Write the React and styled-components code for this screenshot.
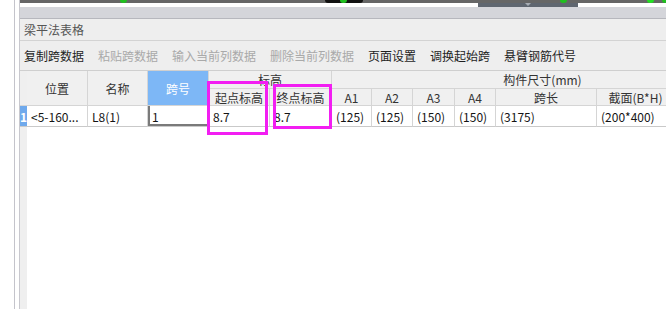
import React from 'react'
import styled, { createGlobalStyle } from 'styled-components'

const GlobalStyle = createGlobalStyle`
  html, body {
    margin: 0;
    padding: 0;
    background: #ffffff;
  }
  * {
    box-sizing: border-box;
  }
`

const fontStack = `"Microsoft YaHei", "Noto Sans CJK SC", "Noto Sans", sans-serif`

const Page = styled.div`
  position: relative;
  width: 666px;
  height: 309px;
  overflow: hidden;
  display: flex;
  background: #ffffff;
  font-family: ${fontStack};
  font-size: 12px;
`

const Frame = styled.div`
  flex: 1;
  display: flex;
  margin-left: 14px;
  padding-left: 4px;
  border-left: 1px solid #c4c4cb;
  min-width: 0;
`

const Panel = styled.div`
  flex: 1;
  display: flex;
  flex-direction: column;
  min-width: 0;
  overflow: hidden;
  border-left: 1px solid #c8c8ce;
  background: #eeeeee;
`

const CanvasStrip = styled.div`
  position: relative;
  height: 3px;
  background: #666666;
  flex-shrink: 0;
`

const Blob = styled.span`
  position: absolute;
  top: 0;
  left: ${(p) => p.x}px;
  width: ${(p) => p.w || 7}px;
  height: 3px;
  background: ${(p) => p.color || '#1fbf1f'};
  border-radius: 0 0 3px 3px;
`

const TabRow = styled.div`
  height: 4px;
  background: #ffffff;
  flex-shrink: 0;
  display: flex;
`

const SplitTab = styled.div`
  margin-left: 458px;
  width: 100px;
  height: 4px;
  background: #5f6670;
  display: flex;
  justify-content: center;
  &::after {
    content: '';
    width: 0;
    height: 0;
    border-left: 3px solid transparent;
    border-right: 3px solid transparent;
    border-top: 3px solid #a7adb5;
  }
`

const TitleBand = styled.div`
  height: 12px;
  background: #d4d5da;
  border-bottom: 1px solid #b6b7bd;
  flex-shrink: 0;
`

const TitleRow = styled.div`
  height: 22px;
  display: flex;
  align-items: center;
  padding-left: 4px;
  color: #555555;
  border-bottom: 1px solid #d3d3d3;
  flex-shrink: 0;
`

const Toolbar = styled.div`
  height: 29px;
  display: flex;
  align-items: center;
  gap: 14px;
  padding-left: 4px;
  flex-shrink: 0;
`

const ToolItem = styled.span`
  color: ${(p) => (p.disabled ? '#a9a9a9' : '#1e1e1e')};
  white-space: nowrap;
`

const TableArea = styled.div`
  flex: 1;
  background-color: #ffffff;
  background-image: linear-gradient(#efefef, #efefef);
  background-size: 7px 100%;
  background-repeat: no-repeat;
`

const Grid = styled.div`
  display: grid;
  grid-template-columns: 7px 61px 60px 61px 61px 62px 40px 41px 42px 41px 101px 78px 79px;
  grid-template-rows: 18px 17px 21px;
  width: max-content;
  border-top: 1px solid #cfcfcf;
`

const HeadCell = styled.div`
  grid-column: ${(p) => p.col || 'auto'};
  grid-row: ${(p) => p.row || 'auto'};
  display: flex;
  align-items: center;
  justify-content: center;
  background: ${(p) => (p.active ? '#7db7f6' : '#f0f0f0')};
  color: ${(p) => (p.active ? '#ffffff' : '#333333')};
  border-right: 1px solid #d5d5d5;
  border-bottom: 1px solid #d5d5d5;
  white-space: nowrap;
  overflow: hidden;
`

const GutterHead = styled.div`
  grid-column: 1;
  grid-row: 1 / span 2;
  background: #efefef;
  border-bottom: 1px solid #d5d5d5;
`

const RowNumber = styled.div`
  grid-column: 1;
  grid-row: 3;
  display: flex;
  align-items: center;
  justify-content: center;
  background: #6fa9ec;
  color: #ffffff;
  font-weight: bold;
  border-bottom: 1px solid #c9c9c9;
`

const DataCell = styled.div`
  display: flex;
  align-items: center;
  padding-left: 4px;
  color: #141414;
  background: #ffffff;
  border-right: 1px solid #d5d5d5;
  border-bottom: 1px solid #c9c9c9;
  white-space: nowrap;
  overflow: hidden;
  box-shadow: ${(p) => (p.focused ? 'inset 2px -2px 0 #7a7a7a' : 'none')};
`

const Mark = styled.div`
  position: absolute;
  left: ${(p) => p.x}px;
  top: ${(p) => p.y}px;
  width: ${(p) => p.w}px;
  height: ${(p) => p.h}px;
  border: 3px solid #f21ef2;
  pointer-events: none;
`

const tools = [
  { label: '复制跨数据' },
  { label: '粘贴跨数据', disabled: true },
  { label: '输入当前列数据', disabled: true },
  { label: '删除当前列数据', disabled: true },
  { label: '页面设置' },
  { label: '调换起始跨' },
  { label: '悬臂钢筋代号' },
]

const subHeads = ['起点标高', '终点标高', 'A1', 'A2', 'A3', 'A4', '跨长', '截面(B*H)', '']
const rowData = ['<5-160...', 'L8(1)', '1', '8.7', '8.7', '(125)', '(125)', '(150)', '(150)', '(3175)', '(200*400)', '']

const App = () => {
  return (
    <Page>
      <GlobalStyle />
      <Frame>
        <Panel>
          <CanvasStrip>
            <Blob x={100} />
            <Blob x={305} w={38} color="#111111" />
            <Blob x={320} />
            <Blob x={540} />
            <Blob x={627} w={7} color="#22e022" />
            <Blob x={642} />
          </CanvasStrip>
          <TabRow>
            <SplitTab />
          </TabRow>
          <TitleBand />
          <TitleRow>梁平法表格</TitleRow>
          <Toolbar>
            {tools.map((t) => (
              <ToolItem key={t.label} disabled={t.disabled}>
                {t.label}
              </ToolItem>
            ))}
          </Toolbar>
          <TableArea>
            <Grid>
              <GutterHead />
              <HeadCell col="2" row="1 / span 2">位置</HeadCell>
              <HeadCell col="3" row="1 / span 2">名称</HeadCell>
              <HeadCell col="4" row="1 / span 2" active>跨号</HeadCell>
              <HeadCell col="5 / span 2" row="1">标高</HeadCell>
              <HeadCell col="7 / span 7" row="1">构件尺寸(mm)</HeadCell>
              {subHeads.map((h, i) => (
                <HeadCell key={i} col={`${i + 5}`} row="2">
                  {h}
                </HeadCell>
              ))}
              <RowNumber>1</RowNumber>
              {rowData.map((v, i) => (
                <DataCell key={i} focused={i === 2}>
                  {v}
                </DataCell>
              ))}
            </Grid>
          </TableArea>
        </Panel>
      </Frame>
      <Mark x={207} y={81} w={61} h={54} />
      <Mark x={273} y={84} w={59} h={45} />
    </Page>
  )
}

export default App
